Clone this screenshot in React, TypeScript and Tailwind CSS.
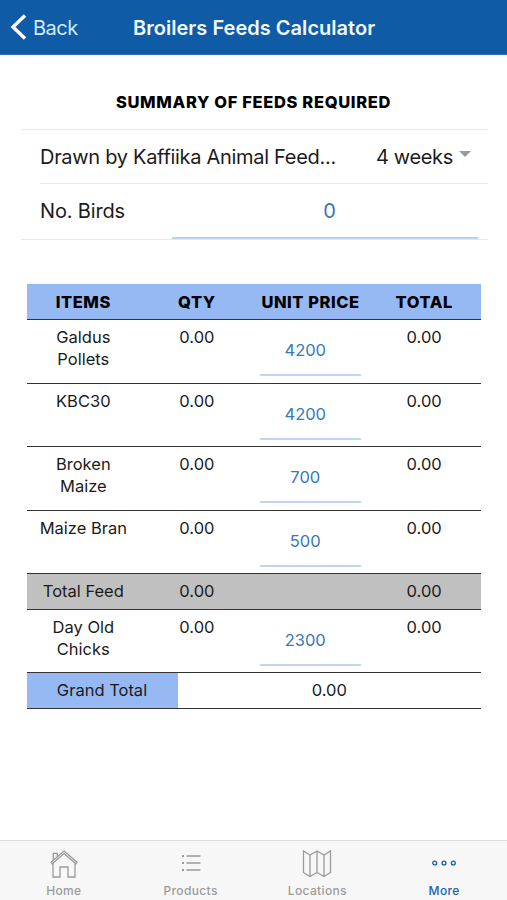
import React from "react";

type Item = { name: string; qty: string; price: string; total: string };

const feeds: Item[] = [
  { name: "Galdus Pollets", qty: "0.00", price: "4200", total: "0.00" },
  { name: "KBC30", qty: "0.00", price: "4200", total: "0.00" },
  { name: "Broken Maize", qty: "0.00", price: "700", total: "0.00" },
  { name: "Maize Bran", qty: "0.00", price: "500", total: "0.00" },
];

function ItemRow({ item }: { item: Item }) {
  return (
    <div className="grid h-[63.5px] grid-cols-4 border-b border-[#333] pt-[6px] text-center">
      <div className="px-[12px]">{item.name}</div>
      <div>{item.qty}</div>
      <div className="ml-[6px] mr-[7px] mt-[3px] h-[47px] w-[101px] border-b-2 border-[#c2d4f5] pr-[10px] pt-[10px] text-[#3478bd]">
        {item.price}
      </div>
      <div>{item.total}</div>
    </div>
  );
}

function Tab({ label, active, children }: { label: string; active?: boolean; children: React.ReactNode }) {
  return (
    <div className={active ? "flex flex-1 flex-col items-center text-[#1763ae]" : "flex flex-1 flex-col items-center text-[#9b9b9b]"}>
      <svg className="ml-px mt-[7px] h-8 w-8" viewBox="0 0 32 32" fill="none" stroke="currentColor" strokeWidth="1.3">
        {children}
      </svg>
      <span className="ml-px mt-[3px] text-[12px] font-medium leading-[16px] tracking-[0.35px]">{label}</span>
    </div>
  );
}

export default function App() {
  return (
    <div className="flex h-[900px] w-[507px] flex-col overflow-hidden bg-white font-['Inter',sans-serif] text-[#1b1b1b]">
      <header className="grid h-[54.5px] shrink-0 grid-cols-[133px_1fr_132px] items-center border-b border-[#2f6fae] bg-[#105ba6] pt-px text-white">
        <div className="flex items-center pl-[10px]">
          <svg className="h-[28px] w-[17px]" viewBox="0 0 17 28" fill="none" stroke="currentColor" strokeWidth="3.4">
            <path d="M15 2.5 3 14l12 11.5" />
          </svg>
          <span className="ml-[6px] mt-px text-[20px] tracking-[-0.5px] text-[#d5e9fa]">Back</span>
        </div>
        <h1 className="mt-px whitespace-nowrap text-center text-[20px] font-semibold tracking-[0.03px] text-[#f1faff]">Broilers Feeds Calculator</h1>
      </header>

      <main className="flex-1">
        <h2 className="mt-[35.5px] text-center text-[16.5px] font-extrabold leading-[24px] tracking-[0.65px] text-black">SUMMARY OF FEEDS REQUIRED</h2>

        <section className="ml-[21px] mr-[19px] mt-[15px] border-y border-[#e7e9eb] text-[20px] tracking-[-0.3px]">
          <div className="ml-[19px] flex h-[54px] items-center border-b border-[#e7e9eb]">
            <span className="w-[336px] whitespace-nowrap">Drawn by Kaffiika Animal Feed...</span>
            <span className="whitespace-nowrap tracking-[-0.35px]">4 weeks</span>
            <svg className="mb-[5px] ml-[6px] h-[6px] w-[12px]" viewBox="0 0 12 6" fill="#999">
              <path d="M0 0h12L6 6z" />
            </svg>
          </div>
          <div className="ml-[19px] flex h-[55px]">
            <span className="w-[132px] leading-[55px] tracking-[-0.15px]">No. Birds</span>
            <span className="w-[306px] border-b-2 border-[#bccff4] text-center leading-[55px] text-[#3478bd]">
              <span className="mr-[-9px]">0</span>
            </span>
          </div>
        </section>

        <section className="ml-[26.5px] mt-[44px] w-[454.5px] text-[16.5px] leading-[22px]">
          <div className="grid h-[36px] grid-cols-4 items-center border-b border-[#333] bg-[#96b9f3] text-center font-extrabold tracking-[0.55px] text-black">
            <div>ITEMS</div>
            <div>QTY</div>
            <div>UNIT PRICE</div>
            <div>TOTAL</div>
          </div>
          {feeds.map((f) => (
            <ItemRow key={f.name} item={f} />
          ))}
          <div className="grid h-[35.5px] grid-cols-4 items-center border-b border-[#333] bg-[#c0c0c0] text-center">
            <div>Total Feed</div>
            <div>0.00</div>
            <div />
            <div>0.00</div>
          </div>
          <ItemRow item={{ name: "Day Old Chicks", qty: "0.00", price: "2300", total: "0.00" }} />
          <div className="grid h-[35.5px] grid-cols-[151px_1fr] border-b border-[#333] text-center leading-[35px]">
            <div className="h-[34.5px] bg-[#96b9f3]">Grand Total</div>
            <div>0.00</div>
          </div>
        </section>
      </main>

      <nav className="flex h-[60px] shrink-0 border-t border-[#dcdcdc] bg-[#f7f7f7]">
        <Tab label="Home">
          <path d="M3 14.2 16 3l13 11.2-1.2 1.5L16 5.6 4.200 15.700z M5 15v14h7V19h8v10h7V15M5.300 12V5.300h4V8.500" />
        </Tab>
        <Tab label="Products">
          <path d="M11.500 8h14M11.500 15h14M11.500 22h14" strokeWidth="1.5" />
          <path d="M7 8h2M7 15h2M7 22h2" strokeWidth="2" />
        </Tab>
        <Tab label="Locations">
          <path d="m2.500 3 6.500 4 7-4 7 4 6.500-4v21.500l-6.500 4-7-4-7 4-6.500-4zM9 7v21.500M16 3v21.500M23 7v21.500" />
        </Tab>
        <Tab label="More" active>
          <g strokeWidth="1.4">
            <circle cx="6.700" cy="15" r="1.900" />
            <circle cx="16" cy="15" r="1.900" />
            <circle cx="25.300" cy="15" r="1.900" />
          </g>
        </Tab>
      </nav>
    </div>
  );
}
